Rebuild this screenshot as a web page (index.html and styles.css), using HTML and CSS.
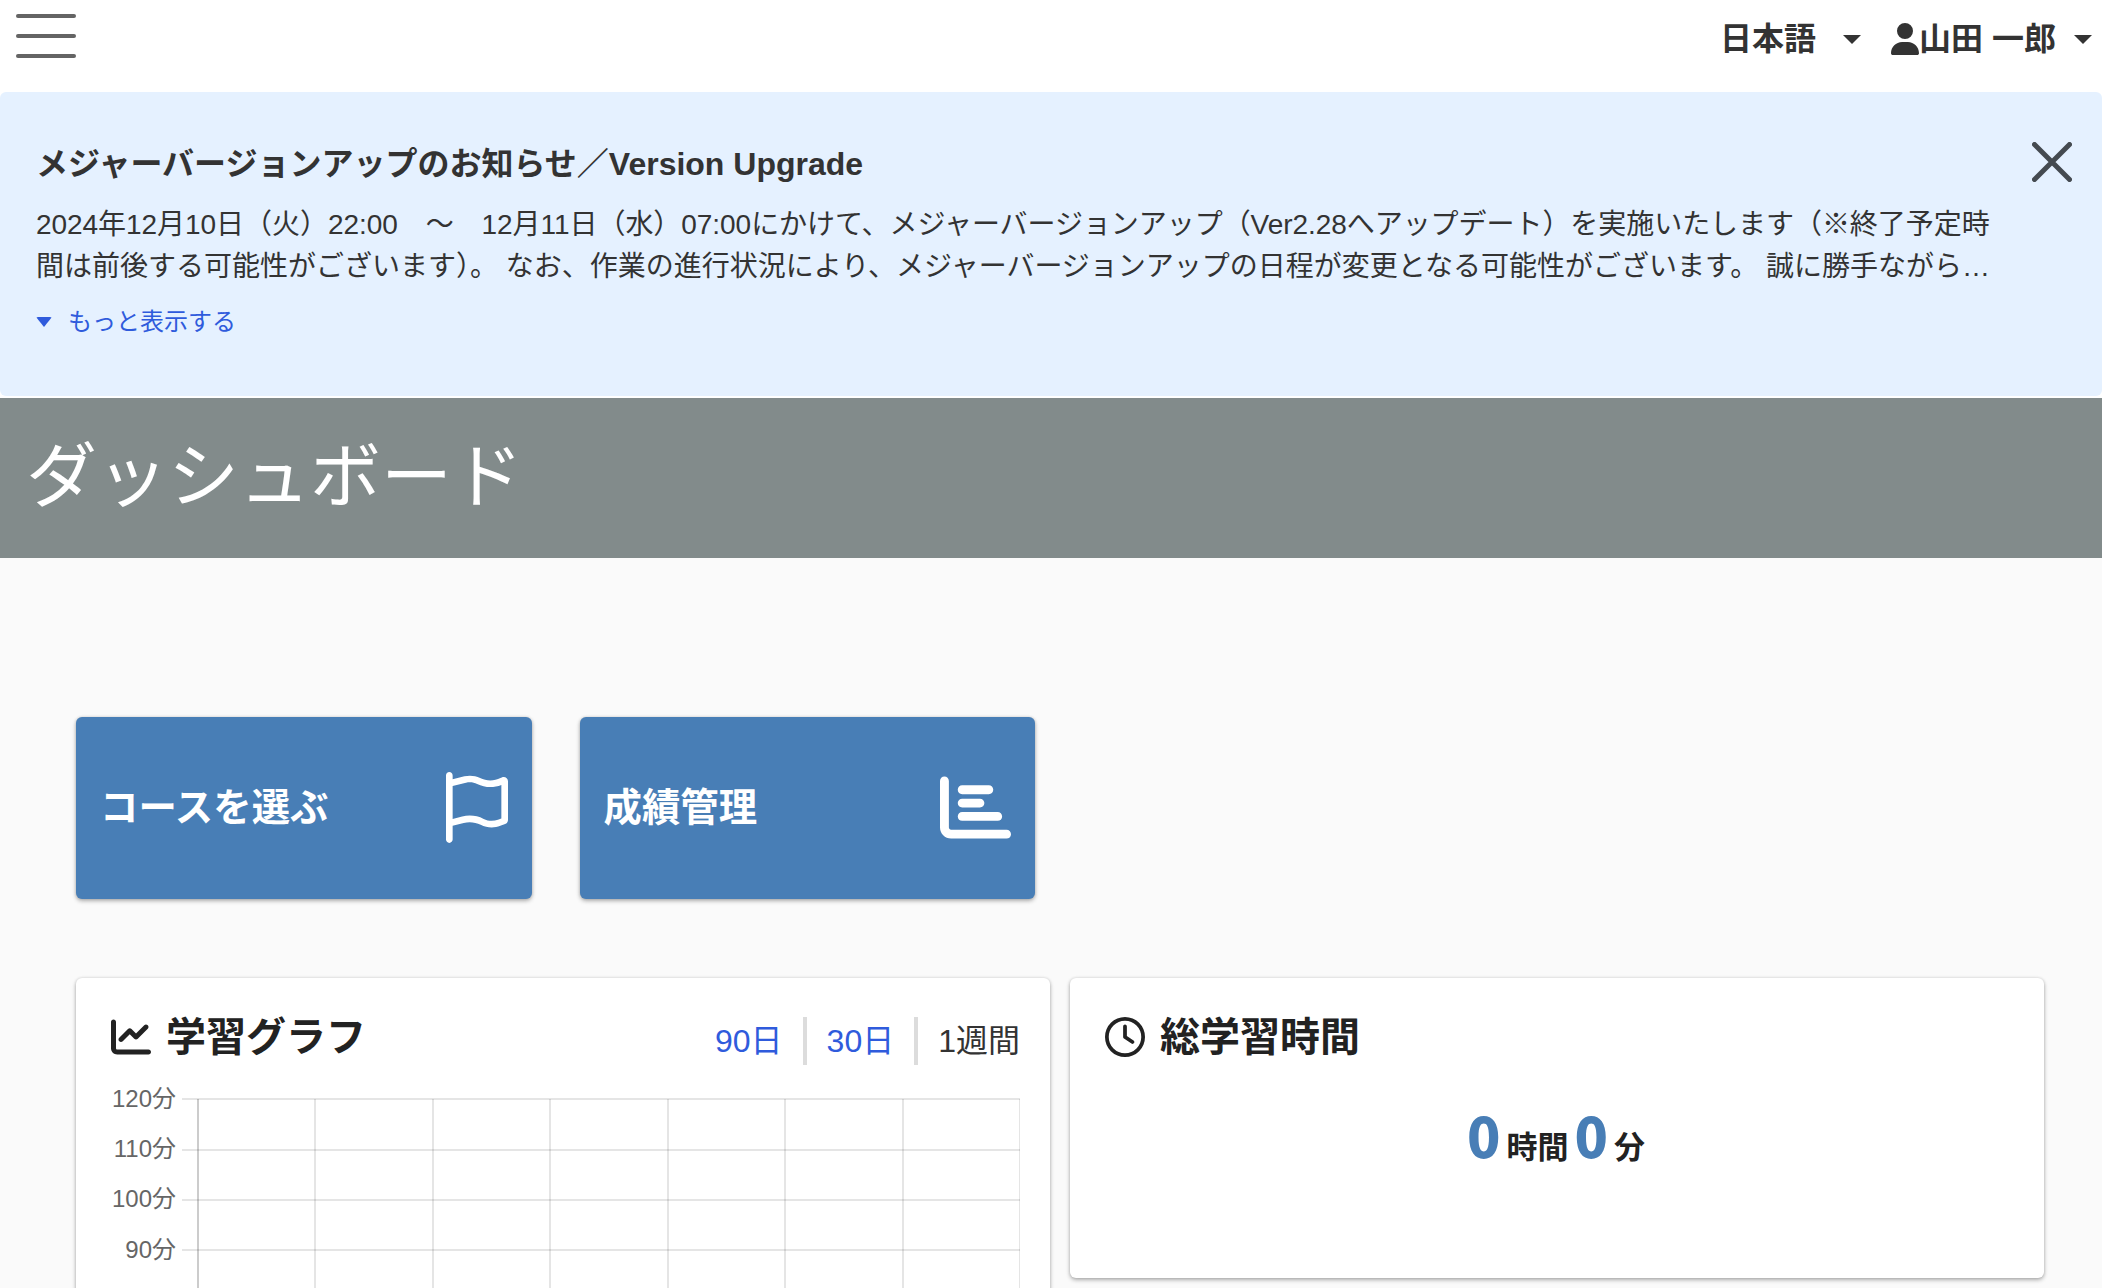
FILE: index.html
```html
<!DOCTYPE html>
<html lang="ja">
<head>
    <meta charset="UTF-8">
    <meta name="viewport" content="width=device-width, initial-scale=1.0">
    <title>ダッシュボード</title>
    <link rel="stylesheet" href="styles.css">
</head>
<body>
    <header class="header">
        <button class="menu-button" aria-label="メニュー">
            <span></span>
            <span></span>
            <span></span>
        </button>
        <nav class="header-nav">
            <a href="#" class="nav-item nav-lang">日本語<i class="caret"></i></a>
            <a href="#" class="nav-item nav-user"><svg class="user-icon" viewBox="0 0 448 512"><path d="M224 256A128 128 0 1 0 224 0a128 128 0 1 0 0 256zm-45.7 48C79.8 304 0 383.8 0 482.3C0 498.7 13.3 512 29.7 512H418.3c16.4 0 29.7-13.3 29.7-29.7C448 383.8 368.2 304 269.7 304H178.3z"/></svg>山田 一郎<i class="caret"></i></a>
        </nav>
    </header>

    <section class="notice">
        <div class="notice-body">
            <h2 class="notice-title">メジャーバージョンアップのお知らせ／Version Upgrade</h2>
            <p class="notice-text">
                <span class="line line-first">2024年12月10日（火）22:00　～　12月11日（水）07:00にかけて、メジャーバージョンアップ（Ver2.28へアップデート）を実施いたします（※終了予定時</span>
                <span class="line">間は前後する可能性がございます）。 なお、作業の進行状況により、メジャーバージョンアップの日程が変更となる可能性がございます。 誠に勝手ながら…</span>
            </p>
            <a href="#" class="notice-more"><i class="caret"></i>もっと表示する</a>
        </div>
        <button class="notice-close" aria-label="閉じる">
            <svg viewBox="0 0 40 40"><path d="M2.5 2.5l35 35M37.5 2.5l-35 35"/></svg>
        </button>
    </section>

    <div class="page-title">
        <h1>ダッシュボード</h1>
    </div>

    <main class="content">
        <div class="tiles">
            <a href="#" class="tile">
                <span>コースを選ぶ</span>
                <svg class="tile-flag" viewBox="0 0 448 512"><path d="M48 24C48 10.7 37.3 0 24 0S0 10.7 0 24V64 350.5 400v88c0 13.3 10.7 24 24 24s24-10.7 24-24V388l80.3-20.1c41.1-10.3 84.6-5.5 122.5 13.4c44.2 22.1 95.5 24.8 141.7 7.4l34.7-13c12.5-4.7 20.8-16.6 20.8-30V66.1c0-23-24.2-38-44.8-27.7l-9.6 4.8c-46.3 23.2-100.8 23.2-147.1 0c-35.1-17.6-75.4-22-113.5-12.5L48 52V24zm0 77.5l96.6-24.2c27-6.7 55.5-3.6 80.4 8.8c54.9 27.4 118.7 29.7 175 6.8V334.7l-24.4 9.1c-33.7 12.6-71.2 10.7-103.4-5.4c-48.2-24.1-103.3-30.1-155.6-17.1L48 338.5v-237z"/></svg>
            </a>
            <a href="#" class="tile">
                <span>成績管理</span>
                <svg class="tile-chart" viewBox="0 0 512 512"><path d="M32 32c17.7 0 32 14.3 32 32V400c0 8.8 7.2 16 16 16H480c17.7 0 32 14.3 32 32s-14.3 32-32 32H80c-44.2 0-80-35.8-80-80V64C0 46.3 14.3 32 32 32zm96 96c0-17.7 14.3-32 32-32l192 0c17.7 0 32 14.3 32 32s-14.3 32-32 32l-192 0c-17.7 0-32-14.3-32-32zm32 64H288c17.7 0 32 14.3 32 32s-14.3 32-32 32H160c-17.7 0-32-14.3-32-32s14.3-32 32-32zm0 96H416c17.7 0 32 14.3 32 32s-14.3 32-32 32H160c-17.7 0-32-14.3-32-32s14.3-32 32-32z"/></svg>
            </a>
        </div>

        <div class="panels">
            <section class="panel panel-graph">
                <div class="panel-head">
                    <h2 class="panel-title">
                        <svg viewBox="0 0 512 512"><path d="M64 64c0-17.7-14.3-32-32-32S0 46.3 0 64V400c0 44.2 35.8 80 80 80H480c17.7 0 32-14.3 32-32s-14.3-32-32-32H80c-8.8 0-16-7.2-16-16V64zm406.6 86.6c12.5-12.5 12.5-32.8 0-45.3s-32.8-12.5-45.3 0L320 210.7l-57.4-57.4c-12.5-12.5-32.8-12.5-45.3 0l-112 112c-12.5 12.5-12.5 32.8 0 45.3s32.8 12.5 45.3 0L240 221.3l57.4 57.4c12.5 12.5 32.8 12.5 45.3 0l128-128z"/></svg>
                        学習グラフ
                    </h2>
                    <ul class="range">
                        <li><a href="#">90日</a></li>
                        <li><a href="#">30日</a></li>
                        <li>1週間</li>
                    </ul>
                </div>
                <svg class="chart" width="909" height="210" viewBox="0 0 909 210">
                    <!-- 横の目盛り線 -->
                    <path class="grid" d="M71 21H909M71 72H909M71 122H909M71 172H909"/>
                    <!-- 縦の目盛り線 -->
                    <path class="grid" d="M204 21V210M322 21V210M439 21V210M557 21V210M674 21V210M792 21V210M909 21V210"/>
                    <path class="axis" d="M87 21V210"/>
                    <g class="labels">
                        <text x="65" y="29">120分</text>
                        <text x="65" y="79">110分</text>
                        <text x="65" y="129">100分</text>
                        <text x="65" y="180">90分</text>
                    </g>
                </svg>
            </section>

            <section class="panel panel-time">
                <h2 class="panel-title">
                    <svg viewBox="0 0 512 512"><path d="M464 256A208 208 0 1 1 48 256a208 208 0 1 1 416 0zM0 256a256 256 0 1 0 512 0A256 256 0 1 0 0 256zM232 120V256c0 8 4 15.5 10.7 20l96 64c11 7.4 25.9 4.4 33.3-6.7s4.4-25.9-6.7-33.3L280 243.2V120c0-13.3-10.7-24-24-24s-24 10.7-24 24z"/></svg>
                    総学習時間
                </h2>
                <p class="total-time"><b>0</b><span>時間</span><b>0</b><span>分</span></p>
            </section>
        </div>
    </main>
</body>
</html>
```

FILE: styles.css
```css
* {
    margin: 0;
    padding: 0;
    box-sizing: border-box;
}

:root {
    --text: #333333;
    --text-dark: #222222;
    --link: #2f5bdc;
    --blue: #487eb6;
    --gray: #828b8b;
    --notice-bg: #e5f1ff;
    --page-bg: #fafafa;
    --shadow: 0 2px 4px rgba(0, 0, 0, 0.3), 0 0 3px rgba(0, 0, 0, 0.12);
}

body {
    height: 1288px;
    overflow: hidden;
    background: var(--page-bg);
    color: var(--text);
    font-family: "Liberation Sans", "Noto Sans CJK JP", Arial, sans-serif;
}

a {
    color: inherit;
    text-decoration: none;
}

button {
    border: none;
    background: none;
    cursor: pointer;
}

svg {
    display: block;
    fill: currentColor;
}

.caret {
    display: inline-block;
    border: 9px solid transparent;
    border-top-color: currentColor;
    border-bottom: 0;
}

/* ヘッダー */
.header {
    display: flex;
    justify-content: space-between;
    align-items: flex-start;
    height: 92px;
    padding: 14px 10px 0 16px;
    background: #fff;
}

.menu-button {
    display: flex;
    flex-direction: column;
    gap: 16px;
}

.menu-button span {
    width: 60px;
    height: 4px;
    border-radius: 2px;
    background: #646464;
}

.header-nav {
    display: flex;
    gap: 30px;
}

.nav-item {
    display: flex;
    align-items: center;
    height: 50px;
    font-size: 32px;
    font-weight: 700;
    line-height: 50px;
    white-space: pre;
}

.nav-item .caret {
    margin-left: 18px;
}

.nav-lang .caret {
    margin-left: 27px;
}

.user-icon {
    width: 28px;
    height: 32px;
}

/* お知らせ */
.notice {
    display: flex;
    justify-content: space-between;
    height: 304px;
    padding: 47px 30px 0 36px;
    border-radius: 6px;
    background: var(--notice-bg);
    box-shadow: 0 0 0 6px #fff;
}

.notice-title {
    font-size: 32px;
    line-height: 50px;
}

.notice-text {
    margin-top: 15px;
    font-size: 28px;
    line-height: 42px;
}

.notice-text .line {
    display: block;
    white-space: nowrap;
}

.notice-text .line-first {
    letter-spacing: -0.05px;
}

.notice-more {
    display: flex;
    align-items: center;
    gap: 16px;
    margin-top: 16px;
    color: var(--link);
    font-size: 24px;
    line-height: 36px;
}

.notice-more .caret {
    border-width: 10px 8px 0;
    border-radius: 2px;
}

.notice-close {
    width: 40px;
    height: 40px;
    margin-top: 3px;
}

.notice-close svg {
    stroke: #444a50;
    stroke-width: 5;
    stroke-linecap: round;
}

/* ページタイトル */
.page-title {
    position: relative;
    height: 160px;
    margin-top: 2px;
    padding: 27px 26px;
    background: var(--gray);
    color: #fff;
}

.page-title h1 {
    font-size: 71px;
    font-weight: 400;
    line-height: 104px;
}

.content {
    padding: 159px 58px 0 76px;
}

/* タイル */
.tiles {
    display: flex;
    gap: 48px;
}

.tile {
    display: flex;
    justify-content: space-between;
    align-items: center;
    width: 455.5px;
    height: 182px;
    padding: 0 24px 2px;
    border-radius: 6px;
    background: var(--blue);
    box-shadow: var(--shadow);
    color: #fff;
    font-size: 38.4px;
    font-weight: 700;
}

.tile span {
    padding-bottom: 6px;
}

.tile-flag {
    width: 62px;
    height: 71px;
}

.tile-chart {
    width: 71px;
    height: 71px;
}

/* パネル */
.panels {
    display: flex;
    align-items: flex-start;
    gap: 20px;
    margin-top: 79px;
}

.panel {
    width: 974px;
    border-radius: 6px;
    background: #fff;
    box-shadow: var(--shadow);
}

.panel-graph {
    height: 600px;
    padding: 35px 30px 0 35px;
}

.panel-time {
    height: 300px;
    padding: 35px 35px 0;
}

.panel-head {
    display: flex;
    justify-content: space-between;
}

.panel-title {
    display: flex;
    align-items: center;
    gap: 15px;
    height: 48px;
    color: var(--text-dark);
    font-size: 40px;
    line-height: 48px;
}

.panel-title svg {
    width: 40px;
    height: 40px;
}

.range {
    display: flex;
    margin-top: 4px;
    list-style: none;
    font-size: 32px;
    line-height: 48px;
}

.range li + li {
    margin-left: 20px;
    padding-left: 20px;
    border-left: 4px solid #dcdcdc;
}

.range a {
    color: var(--link);
}

/* 学習グラフ */
.chart {
    margin-top: 13px;
}

.chart .grid {
    fill: none;
    stroke: rgba(0, 0, 0, 0.1);
    stroke-width: 2;
}

.chart .axis {
    stroke: rgba(0, 0, 0, 0.2);
    stroke-width: 2;
}

.chart .labels {
    fill: #666;
    font-size: 24px;
    text-anchor: end;
}

/* 総学習時間 */
.total-time {
    display: flex;
    justify-content: center;
    align-items: baseline;
    margin-top: 31px;
    padding-left: 4px;
    color: var(--text-dark);
    font-family: "Noto Sans CJK JP", sans-serif;
    font-size: 31px;
    font-weight: 700;
    line-height: 84px;
}

.total-time b {
    color: var(--blue);
    font-size: 55px;
}

.total-time span {
    margin: 0 6px;
}
```
